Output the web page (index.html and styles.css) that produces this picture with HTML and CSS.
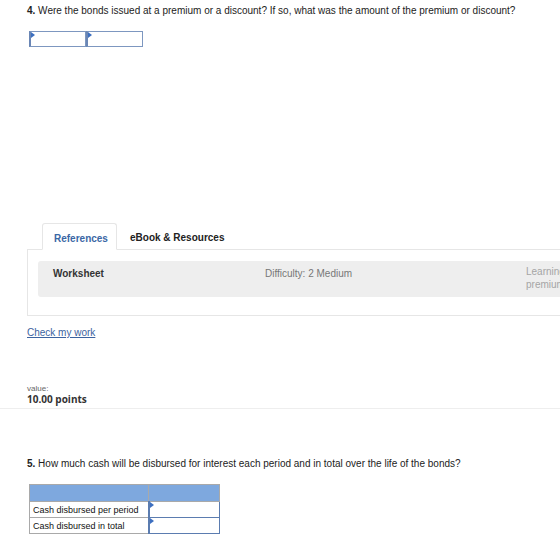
FILE: index.html
```html
<!DOCTYPE html>
<html lang="en">
<head>
    <meta charset="UTF-8">
    <title>Bonds Questions</title>
    <link rel="stylesheet" href="styles.css">
</head>
<body>

    <div class="part">
        <p class="question"><b>4.</b> Were the bonds issued at a premium or a discount? If so, what was the amount of the premium or discount?</p>
        <div class="answer-row">
            <div class="cell"><span class="flag"></span></div>
            <div class="cell"><span class="flag"></span></div>
        </div>
    </div>

    <div class="refs">
        <div class="tabs">
            <div class="tab active">References</div>
            <div class="tab">eBook &amp; Resources</div>
        </div>
        <div class="tab-panel">
            <div class="ref-box">
                <div class="ref-name">Worksheet</div>
                <div class="ref-diff">Difficulty: 2 Medium</div>
                <div class="ref-goal">Learning<br>premium</div>
            </div>
        </div>
    </div>

    <a class="check" href="#">Check my work</a>

    <div class="points">
        <div class="label">value:</div>
        <div class="amount">10.00 points</div>
    </div>

    <div class="part part-5">
        <p class="question"><b>5.</b> How much cash will be disbursed for interest each period and in total over the life of the bonds?</p>
        <table class="grid">
            <tr class="head"><td></td><td></td></tr>
            <tr><td>Cash disbursed per period</td><td class="input"><span class="flag"></span></td></tr>
            <tr><td>Cash disbursed in total</td><td class="input"><span class="flag"></span></td></tr>
        </table>
    </div>

</body>
</html>
```

FILE: styles.css
```css
* {
    margin: 0;
    padding: 0;
    box-sizing: border-box;
}
html {
    overflow: hidden;
}
body {
    width: 700px;
    font-family: "Liberation Sans", Arial, sans-serif;
    color: #222;
    background: #fff;
    overflow: hidden;
}
.question {
    font-size: 10px;
    line-height: 13px;
    padding-left: 27px;
}
.part {
    padding-top: 4px;
}
.answer-row {
    display: flex;
    margin: 14px 0 0 29px;
}
.cell {
    position: relative;
    width: 57px;
    height: 16px;
    border: 1px solid #7d97c0;
    border-left: 2px solid #6a86b5;
}
.flag {
    position: absolute;
    top: 0;
    left: 0;
    width: 0;
    height: 0;
    border-top: 3px solid transparent;
    border-bottom: 3px solid transparent;
    border-left: 4px solid #3d6fc0;
}

/* references tabs */
.refs {
    margin: 176px 0 0 27px;
}
.tabs {
    display: flex;
    height: 27px;
    margin-bottom: -1px;
    font-size: 10px;
    font-weight: bold;
}
.tab {
    padding: 9px 12px 0 13px;
    color: #222;
}
.tab.active {
    margin-left: 15px;
    width: 75px;
    padding-left: 11px;
    color: #3a67a5;
    background: #fff;
    border: 1px solid #e6e6e6;
    border-bottom: 1px solid #fff;
    border-radius: 3px 3px 0 0;
}
.tab-panel {
    border: 1px solid #e6e6e6;
    height: 67px;
    padding: 11px 0 0 10px;
}
.ref-box {
    display: flex;
    height: 36px;
    background: #eeeeee;
    border-radius: 3px;
    font-size: 10px;
    line-height: 13px;
    padding: 6px 0 0 15px;
}
.ref-name {
    width: 212px;
    font-weight: bold;
    color: #333;
}
.ref-diff {
    width: 261px;
    color: #777;
}
.ref-goal {
    margin-top: -2px;
    color: #a5a5a5;
}

.check {
    display: inline-block;
    margin: 11px 0 0 27px;
    font-size: 10px;
    color: #3c63a0;
}

.points {
    margin-top: 44px;
    padding: 0 0 2px 27px;
    border-bottom: 1px solid #eeeeee;
}
.points .label {
    font-size: 8px;
    color: #666;
    line-height: 10px;
}
.points .amount {
    font-family: "Open Sans", sans-serif;
    font-size: 10px;
    font-weight: bold;
    color: #333;
    line-height: 13px;
    margin-top: -1px;
}

.part-5 {
    padding-top: 48px;
}
.grid {
    margin: 14px 0 0 29px;
    border-collapse: collapse;
    font-size: 9px;
}
.grid td {
    height: 16px;
    border: 1px solid #a9a9a9;
    padding: 0 3px;
    color: #111;
}
.grid td:first-child {
    width: 119px;
}
.grid td:last-child {
    width: 71px;
}
.grid .head td {
    height: 17px;
    background: #7ea8de;
}
.grid td.input {
    position: relative;
    border: 1px solid #5b7cb0;
    border-left: 2px solid #5b7cb0;
}
```
